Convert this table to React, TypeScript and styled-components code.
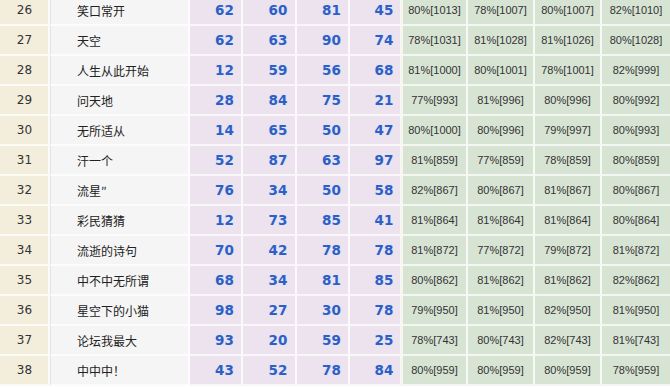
import React from 'react'
import styled, { createGlobalStyle } from 'styled-components'

const GlobalStyle = createGlobalStyle`
  html, body {
    margin: 0;
    padding: 0;
    background: #ffffff;
    overflow: hidden;
  }
`

const Page = styled.div`
  width: 670px;
  height: 388px;
  overflow: hidden;
  background: #ffffff;
`

const Table = styled.table`
  margin-top: -4px;
  width: 670px;
  table-layout: fixed;
  border-collapse: separate;
  border-spacing: 0;
`

const Cell = styled.td`
  box-sizing: border-box;
  height: 30px;
  padding: 0;
  vertical-align: middle;
  border-bottom: 2px solid rgba(255, 255, 255, 0.7);
  border-right: 2px solid rgba(255, 255, 255, 0.8);
  white-space: nowrap;
`

const RankCell = styled(Cell)`
  width: 50px;
  background: #f3eedc;
  text-align: center;
  font-family: 'DejaVu Sans', sans-serif;
  font-size: 12px;
  color: #333333;
  padding-left: 1px;
`

const NameCell = styled(Cell)`
  width: 140px;
  background: #f5f5f5;
  border-left: 1px solid #e3e3e3;
  padding-left: 26px;
  font-family: 'Noto Sans CJK SC', sans-serif;
  font-size: 12px;
  color: #222222;
`

const ScoreCell = styled(Cell)<{ w: number; last?: boolean }>`
  width: ${(p) => p.w}px;
  background: #ece3ee;
  text-align: center;
  padding-left: 18px;
  font-family: 'DejaVu Sans', sans-serif;
  font-weight: bold;
  font-size: 13.5px;
  color: #2f5fc4;
  text-shadow: 0 0 2px #d6e4ff;
  ${(p) => (p.last ? 'border-right: 3px solid #f8f6f0;' : '')}
`

const RateCell = styled(Cell)<{ w: number; edge?: boolean }>`
  width: ${(p) => p.w}px;
  background: #d7e3d3;
  text-align: center;
  font-family: 'Liberation Sans', sans-serif;
  font-size: 11px;
  color: #333333;
  ${(p) => (p.edge ? 'border-right: none;' : '')}
`

type Row = {
  rank: number
  name: string
  scores: number[]
  rates: string[]
}

const rows: Row[] = [
  { rank: 26, name: '笑口常开', scores: [62, 60, 81, 45], rates: ['80%[1013]', '78%[1007]', '80%[1007]', '82%[1010]'] },
  { rank: 27, name: '天空', scores: [62, 63, 90, 74], rates: ['78%[1031]', '81%[1028]', '81%[1026]', '80%[1028]'] },
  { rank: 28, name: '人生从此开始', scores: [12, 59, 56, 68], rates: ['81%[1000]', '80%[1001]', '78%[1001]', '82%[999]'] },
  { rank: 29, name: '问天地', scores: [28, 84, 75, 21], rates: ['77%[993]', '81%[996]', '80%[996]', '80%[992]'] },
  { rank: 30, name: '无所适从', scores: [14, 65, 50, 47], rates: ['80%[1000]', '80%[996]', '79%[997]', '80%[993]'] },
  { rank: 31, name: '汗一个', scores: [52, 87, 63, 97], rates: ['81%[859]', '77%[859]', '78%[859]', '80%[859]'] },
  { rank: 32, name: '流星″', scores: [76, 34, 50, 58], rates: ['82%[867]', '80%[867]', '81%[867]', '80%[867]'] },
  { rank: 33, name: '彩民猜猜', scores: [12, 73, 85, 41], rates: ['81%[864]', '81%[864]', '81%[864]', '80%[864]'] },
  { rank: 34, name: '流逝的诗句', scores: [70, 42, 78, 78], rates: ['81%[872]', '77%[872]', '79%[872]', '81%[872]'] },
  { rank: 35, name: '中不中无所谓', scores: [68, 34, 81, 85], rates: ['80%[862]', '81%[862]', '81%[862]', '82%[862]'] },
  { rank: 36, name: '星空下的小猫', scores: [98, 27, 30, 78], rates: ['79%[950]', '81%[950]', '82%[950]', '81%[950]'] },
  { rank: 37, name: '论坛我最大', scores: [93, 20, 59, 25], rates: ['78%[743]', '80%[743]', '82%[743]', '81%[743]'] },
  { rank: 38, name: '中中中！', scores: [43, 52, 78, 84], rates: ['80%[959]', '80%[959]', '80%[959]', '78%[959]'] },
]

const scoreWidths = [53, 54, 53, 53]
const rateWidths = [65, 67, 67, 68]

export default function App() {
  return (
    <Page>
      <GlobalStyle />
      <Table>
        <tbody>
          {rows.map((row) => (
            <tr key={row.rank}>
              <RankCell>{row.rank}</RankCell>
              <NameCell>{row.name}</NameCell>
              {row.scores.map((s, i) => (
                <ScoreCell key={i} w={scoreWidths[i]} last={i === 3}>
                  {s}
                </ScoreCell>
              ))}
              {row.rates.map((r, i) => (
                <RateCell key={i} w={rateWidths[i]} edge={i === 3}>
                  {r}
                </RateCell>
              ))}
            </tr>
          ))}
        </tbody>
      </Table>
    </Page>
  )
}
